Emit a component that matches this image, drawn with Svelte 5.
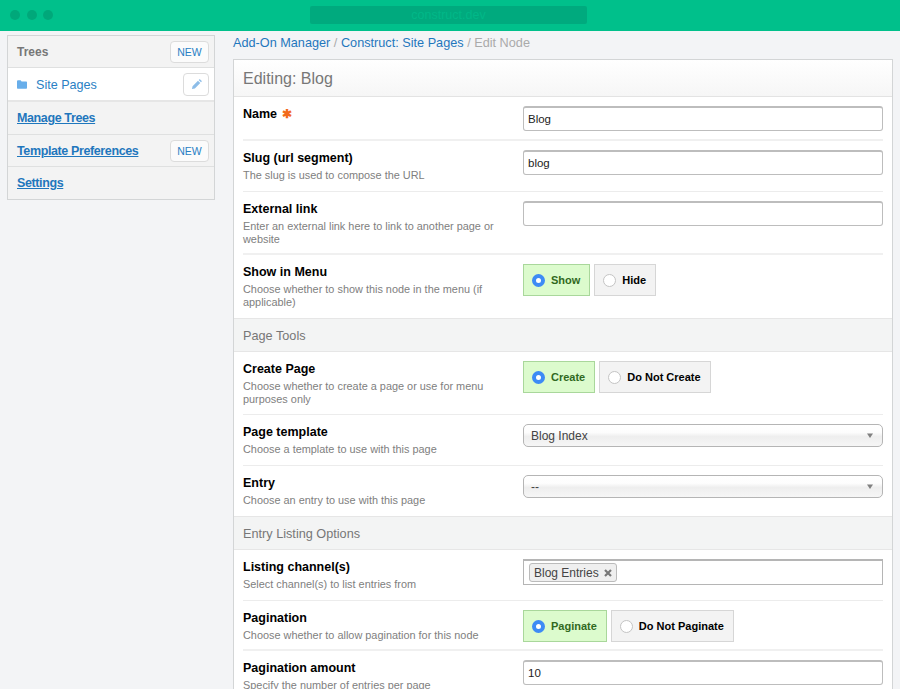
<script>
  const sideRows = [
    { label: 'Manage Trees', cls: 'first' },
    { label: 'Template Preferences', action: 'NEW' },
    { label: 'Settings' }
  ];
</script>

{#snippet radio(on, text)}
  <span class="opt" class:on>
    <span class="dot"></span>
    <span>{text}</span>
  </span>
{/snippet}

{#snippet label(title, note, req)}
  <div class="lab">
    <div class="title">{title}{#if req}<span class="req">✱</span>{/if}</div>
    {#if note}<div class="note">{note}</div>{/if}
  </div>
{/snippet}

{#snippet caret()}
  <svg class="caret" width="6" height="5" viewBox="0 0 6 5"><path d="M0 0.5h6L3 5z" fill="#808080"/></svg>
{/snippet}

<div class="page">
  <header class="bar">
    <div class="lights"><i></i><i></i><i></i></div>
    <div class="url">construct.dev</div>
  </header>

  <div class="wrap">
    <aside class="side">
      <div class="srow head">
        <span class="trees">Trees</span>
        <span class="btn">NEW</span>
      </div>
      <div class="srow active">
        <span class="pages">
          <svg width="10" height="9" viewBox="0 0 10 9"><path d="M0 1.2C0 .6.4.3 1 .3h2.6l1 1.2H9c.6 0 1 .4 1 1v5.2c0 .6-.4 1-1 1H1c-.6 0-1-.4-1-1z" fill="#68aeea"/></svg>
          <span>Site Pages</span>
        </span>
        <span class="btn edit">
          <svg width="11" height="11" viewBox="0 0 12 12"><path d="M1 11l.7-3.2 5.9-5.9 2.5 2.5-5.9 5.9zM8.4 1.1l.6-.6c.3-.3.7-.3 1 0l1.5 1.5c.3.3.3.7 0 1l-.6.6z" fill="#8dbde8"/></svg>
        </span>
      </div>
      {#each sideRows as r}
        <div class="srow link {r.cls ?? ''}">
          <a href="#top">{r.label}</a>
          {#if r.action}<span class="btn">{r.action}</span>{/if}
        </div>
      {/each}
    </aside>

    <main class="main">
      <nav class="crumbs">
        <a href="#top">Add-On Manager</a> <span class="sep">/</span>
        <a href="#top">Construct: Site Pages</a> <span class="sep">/</span>
        <span class="sep">Edit Node</span>
      </nav>

      <section class="card">
        <h1>Editing: Blog</h1>

        <div class="row r44 thick">
          {@render label('Name', '', true)}
          <div class="field"><div class="input">Blog</div></div>
        </div>
        <div class="row r51">
          {@render label('Slug (url segment)', 'The slug is used to compose the URL')}
          <div class="field"><div class="input">blog</div></div>
        </div>
        <div class="row r63 thick">
          {@render label('External link', 'Enter an external link here to link to another page or website')}
          <div class="field"><div class="input"></div></div>
        </div>
        <div class="row r63 last">
          {@render label('Show in Menu', 'Choose whether to show this node in the menu (if applicable)')}
          <div class="field opts">
            {@render radio(true, 'Show')}
            {@render radio(false, 'Hide')}
          </div>
        </div>

        <div class="band">Page Tools</div>

        <div class="row r63">
          {@render label('Create Page', 'Choose whether to create a page or use for menu purposes only')}
          <div class="field opts">
            {@render radio(true, 'Create')}
            {@render radio(false, 'Do Not Create')}
          </div>
        </div>
        <div class="row r51">
          {@render label('Page template', 'Choose a template to use with this page')}
          <div class="field"><div class="select"><span>Blog Index</span>{@render caret()}</div></div>
        </div>
        <div class="row r50 last">
          {@render label('Entry', 'Choose an entry to use with this page')}
          <div class="field"><div class="select"><span>--</span>{@render caret()}</div></div>
        </div>

        <div class="band">Entry Listing Options</div>

        <div class="row r51">
          {@render label('Listing channel(s)', 'Select channel(s) to list entries from')}
          <div class="field">
            <div class="multi">
              <span class="tag">Blog Entries
                <svg width="8" height="8" viewBox="0 0 8 8"><path d="M1 1l6 6M7 1L1 7" stroke="#777" stroke-width="2.2"/></svg>
              </span>
            </div>
          </div>
        </div>
        <div class="row r50 thick">
          {@render label('Pagination', 'Choose whether to allow pagination for this node')}
          <div class="field opts">
            {@render radio(true, 'Paginate')}
            {@render radio(false, 'Do Not Paginate')}
          </div>
        </div>
        <div class="row r50 last">
          {@render label('Pagination amount', 'Specify the number of entries per page')}
          <div class="field"><div class="input">10</div></div>
        </div>
      </section>
    </main>
  </div>
</div>

<style>
  :global(body) {
    margin: 0;
    background: #f3f4f6;
    overflow: hidden;
  }
  .page {
    height: 689px;
    overflow: hidden;
    font-family: "Liberation Sans", Arial, sans-serif;
    font-size: 12px;
    color: #000;
  }
  .bar {
    height: 31px;
    background: #00c08b;
    position: relative;
    display: flex;
    align-items: center;
    justify-content: center;
  }
  .lights {
    position: absolute;
    left: 10px;
    top: 10px;
    display: flex;
    gap: 6.5px;
  }
  .lights i {
    width: 10px;
    height: 10px;
    border-radius: 50%;
    background: #00a87a;
  }
  .url {
    width: 277px;
    height: 18px;
    margin-top: -1px;
    margin-left: -3px;
    border-radius: 2px;
    background: #00aa7e;
    color: #00b888;
    font-size: 12.5px;
    line-height: 18px;
    text-align: center;
  }
  .wrap {
    display: flex;
    align-items: flex-start;
    padding: 4px 7px 0;
    gap: 18px;
  }
  .side {
    width: 206px;
    flex: none;
    border: 1px solid #d3d5d6;
    background: #f3f3f3;
  }
  .srow {
    box-sizing: border-box;
    height: 32px;
    padding: 0 5px 0 9px;
    display: flex;
    align-items: center;
    justify-content: space-between;
    border-bottom: 1px solid #dfe0e0;
  }
  .srow:last-child {
    border-bottom: 0;
  }
  .first {
    height: 33px;
  }
  .trees {
    font-weight: 700;
    color: #777;
    font-size: 12px;
  }
  .active {
    background: #fff;
    height: 34px;
    padding-top: 1px;
    border-bottom: 2px solid #e6e6e6;
  }
  .pages {
    display: flex;
    align-items: center;
    gap: 9px;
    color: #2a7fc4;
    font-size: 12.6px;
  }
  .btn {
    box-sizing: border-box;
    height: 22px;
    width: 39px;
    border: 1px solid #dcdcdc;
    border-radius: 4px;
    background: #fbfbfb;
    color: #2a7fc4;
    font-size: 10.5px;
    display: flex;
    align-items: center;
    justify-content: center;
  }
  .edit {
    width: 26px;
    height: 23px;
    background: #fff;
  }
  .link a {
    font-weight: 700;
    font-size: 12.5px;
    letter-spacing: -0.38px;
    color: #1f77bd;
  }
  a {
    color: #1f77bd;
  }
  .main {
    width: 660px;
    flex: none;
  }
  .crumbs {
    height: 24px;
    line-height: 16px;
    font-size: 12.7px;
    color: #aaa;
    white-space: nowrap;
  }
  .crumbs a {
    text-decoration: none;
  }
  .card {
    background: #fff;
    border: 1px solid #d3d5d6;
  }
  h1 {
    margin: 0;
    height: 37px;
    box-sizing: border-box;
    padding: 0 9px;
    line-height: 37px;
    font-size: 16px;
    font-weight: 400;
    color: #777;
    background: linear-gradient(#fff, #f6f6f6);
    border-bottom: 1px solid #e3e3e3;
  }
  .band {
    box-sizing: border-box;
    height: 34px;
    padding: 0 9px;
    line-height: 34px;
    font-size: 12.7px;
    color: #777;
    background: #f3f4f4;
    border-top: 1px solid #e6e6e6;
    border-bottom: 1px solid #e6e6e6;
  }
  .row {
    box-sizing: border-box;
    margin: 0 9px;
    padding-top: 9px;
    display: flex;
    border-bottom: 1px solid #ececec;
  }
  .row.thick {
    border-bottom: 2px solid #f0f0f0;
  }
  .row.last {
    border-bottom: 0;
  }
  .r44 { height: 44px; }
  .r50 { height: 50px; }
  .r51 { height: 51px; }
  .r63 { height: 63px; }
  .lab {
    width: 280px;
    flex: none;
  }
  .title {
    font-weight: 700;
    font-size: 12.5px;
    line-height: 16px;
  }
  .req {
    color: #f26a1b;
    margin-left: 5px;
    font-size: 12px;
  }
  .note {
    color: #808080;
    font-size: 10.9px;
    line-height: 13px;
    margin-top: 3px;
  }
  .field {
    width: 360px;
    margin-left: auto;
    flex: none;
  }
  .input {
    box-sizing: border-box;
    height: 25px;
    border: 1px solid #bdbdbd;
    border-top-width: 2px;
    border-radius: 3px;
    padding: 0 4px;
    font-size: 11.5px;
    line-height: 22px;
    color: #222;
    background: #fff;
  }
  .select {
    box-sizing: border-box;
    height: 23px;
    border: 1px solid #b5b5b5;
    border-radius: 5px;
    padding: 0 9px 0 7px;
    font-size: 12px;
    color: #444;
    background: linear-gradient(#fff 0, #fdfdfd 35%, #eeeeee 55%, #f6f6f6 100%);
    display: flex;
    align-items: center;
    justify-content: space-between;
  }
  .multi {
    box-sizing: border-box;
    height: 26px;
    border: 1px solid #b5b5b5;
    border-top-width: 2px;
    padding: 2px 5px;
    background: #fff;
  }
  .tag {
    box-sizing: border-box;
    display: inline-flex;
    align-items: center;
    gap: 5px;
    height: 19px;
    padding: 0 4px;
    border: 1px solid #bbb;
    border-radius: 3px;
    background: #efefef;
    color: #444;
    font-size: 12px;
    vertical-align: top;
  }
  .opts {
    display: flex;
    gap: 4px;
    align-items: flex-start;
  }
  .opt {
    box-sizing: border-box;
    height: 32px;
    padding: 0 9px 0 8px;
    display: inline-flex;
    align-items: center;
    gap: 6px;
    border: 1px solid #d6d6d6;
    background: #f3f3f3;
    font-weight: 700;
    font-size: 11px;
  }
  .opt.on {
    background: #dcfbcd;
    border-color: #a9d79b;
    color: #31691f;
  }
  .dot {
    box-sizing: border-box;
    width: 13px;
    height: 13px;
    border-radius: 50%;
    background: #fff;
    border: 1px solid #c4c4c4;
  }
  .on .dot {
    border: 4.5px solid #3d8bf5;
  }
</style>
